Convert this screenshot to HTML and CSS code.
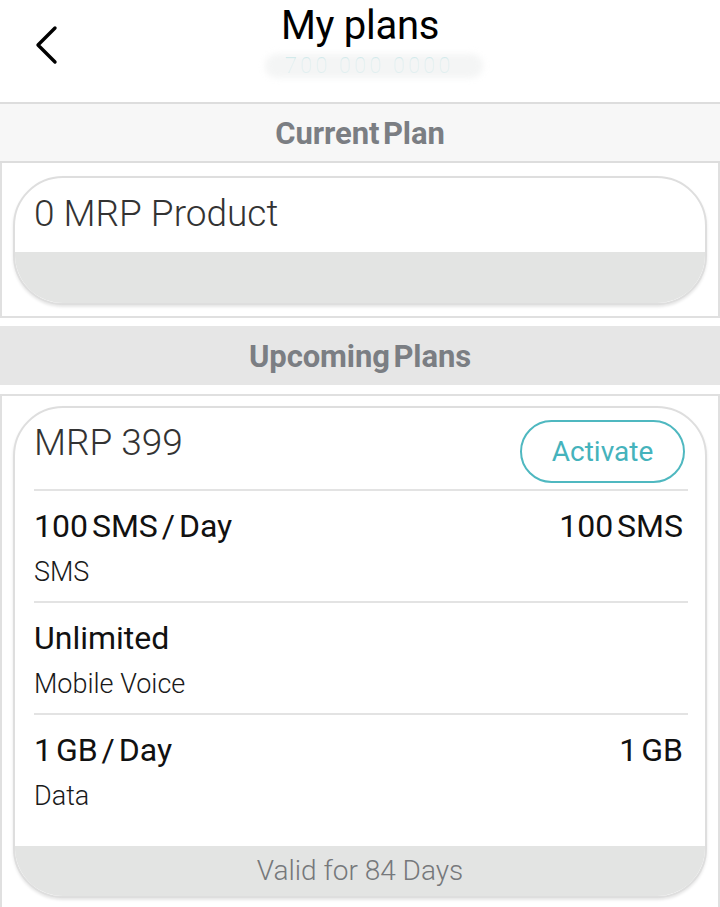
FILE: index.html
```html
<!DOCTYPE html>
<html lang="en">
<head>
<meta charset="utf-8">
<title>My plans</title>
<link rel="stylesheet" href="styles.css">
</head>
<body>
<header class="topbar">
  <div class="back">
    <svg class="back-icon" width="28" height="42" viewBox="0 0 28 42" aria-hidden="true">
      <path d="M21 4 L4 21 L21 38" fill="none" stroke="#000" stroke-width="3.4" stroke-linecap="round" stroke-linejoin="round"/>
    </svg>
  </div>
  <div class="title-wrap">
    <h1 class="title">My plans</h1>
    <div class="number"><span class="number-text">700 000 0000</span><span class="smudge"></span></div>
  </div>
  <div class="spacer"></div>
</header>

<div class="section-title section-current">Current Plan</div>
<section class="panel">
  <div class="plan-card">
    <div class="plan-head-simple">0 MRP Product</div>
    <div class="plan-foot"></div>
  </div>
</section>

<div class="section-title section-upcoming">Upcoming Plans</div>
<section class="panel panel-open">
  <div class="plan-card">
    <div class="plan-head">
      <div class="plan-name">MRP 399</div>
      <button class="activate">Activate</button>
    </div>
    <div class="plan-body">
      <div class="benefit">
        <div class="benefit-line">
          <span class="benefit-title">100 SMS / Day</span>
          <span class="benefit-value">100 SMS</span>
        </div>
        <div class="benefit-sub">SMS</div>
      </div>
      <div class="benefit">
        <div class="benefit-line">
          <span class="benefit-title">Unlimited</span>
        </div>
        <div class="benefit-sub">Mobile Voice</div>
      </div>
      <div class="benefit">
        <div class="benefit-line">
          <span class="benefit-title">1 GB / Day</span>
          <span class="benefit-value">1 GB</span>
        </div>
        <div class="benefit-sub">Data</div>
      </div>
    </div>
    <div class="plan-foot validity">Valid for 84 Days</div>
  </div>
</section>
</body>
</html>
```
FILE: styles.css
```css
* { box-sizing: border-box; }

html, body {
  margin: 0;
  padding: 0;
  background: #ffffff;
  font-family: Roboto, "Liberation Sans", Arial, sans-serif;
  color: #111;
  overflow: hidden;
}

.topbar {
  height: 102px;
  display: grid;
  grid-template-columns: 1fr auto 1fr;
}

.back {
  padding: 24px 0 0 34px;
}

.back-icon { display: block; }

.title-wrap {
  display: flex;
  flex-direction: column;
  align-items: center;
}

.title {
  margin: 0;
  padding-top: 3px;
  font-size: 40px;
  line-height: 46px;
  font-weight: 400;
  color: #000;
  letter-spacing: -0.3px;
}

.number {
  position: relative;
  margin-top: 2px;
  margin-left: 28px;
  width: 218px;
  height: 28px;
  display: flex;
  justify-content: flex-start;
  align-items: center;
  padding-left: 20px;
}

.number-text {
  font-size: 22px;
  font-weight: 300;
  color: #4fc0c9;
  letter-spacing: 3px;
  filter: blur(0.6px);
}

.smudge {
  position: absolute;
  left: 0;
  right: 0;
  top: 3px;
  bottom: 1px;
  background: rgba(243, 244, 244, 0.93);
  border-radius: 14px;
  filter: blur(3px);
}

.section-title {
  text-align: center;
  font-weight: 700;
  font-size: 31px;
  color: #7b7e83;
  letter-spacing: -0.1px;
  word-spacing: -4px;
}

.section-current {
  border-top: 2px solid #dddddd;
  border-bottom: 2px solid #dddddd;
  background: #f7f7f7;
  height: 61px;
  line-height: 59px;
}

.section-upcoming {
  margin: 0 0 9px;
  background: #e6e6e6;
  height: 59px;
  line-height: 61px;
}

.panel {
  border: 2px solid #e0e0e0;
  border-top: none;
  padding: 13px 11px 11px;
  margin-bottom: 8px;
}

.panel-open {
  border-top: 2px solid #e0e0e0;
  border-bottom: none;
  padding: 10px 11px 12px;
  margin-bottom: 0;
}

.plan-card {
  border: 2px solid #dedede;
  border-radius: 50px;
  overflow: hidden;
  background: #fff;
  box-shadow: 0 2px 3px rgba(0, 0, 0, 0.10);
}

.plan-head-simple {
  height: 74px;
  padding: 15px 19px 0;
  font-size: 37px;
  line-height: 42px;
  font-weight: 300;
  color: #333;
}

.plan-foot {
  height: 51px;
  background: #e3e4e3;
}

.plan-head {
  display: flex;
  justify-content: space-between;
  align-items: flex-start;
  padding: 12px 20px 6px 19px;
}

.plan-name {
  margin-top: 1px;
  font-size: 37px;
  line-height: 44px;
  font-weight: 300;
  color: #333;
}

.activate {
  width: 165px;
  height: 63px;
  border: 2px solid #4fb8c0;
  border-radius: 32px;
  background: #fff;
  color: #45b3bc;
  font-family: inherit;
  font-size: 28px;
  font-weight: 400;
  padding: 0;
}

.plan-body {
  margin: 0 17px 0 19px;
  padding-bottom: 21px;
}

.benefit {
  border-top: 2px solid #e3e3e3;
  padding: 17px 5px 13px 0;
}

.benefit-line {
  display: flex;
  justify-content: space-between;
  font-size: 32px;
  line-height: 37px;
  font-weight: 400;
  color: #111;
  word-spacing: -4px;
}

.benefit-sub {
  margin-top: 11px;
  font-size: 27px;
  line-height: 32px;
  font-weight: 300;
  color: #1a1a1a;
}

.validity {
  height: 50px;
  text-align: center;
  font-size: 28px;
  line-height: 50px;
  font-weight: 300;
  color: #76787b;
}
```
